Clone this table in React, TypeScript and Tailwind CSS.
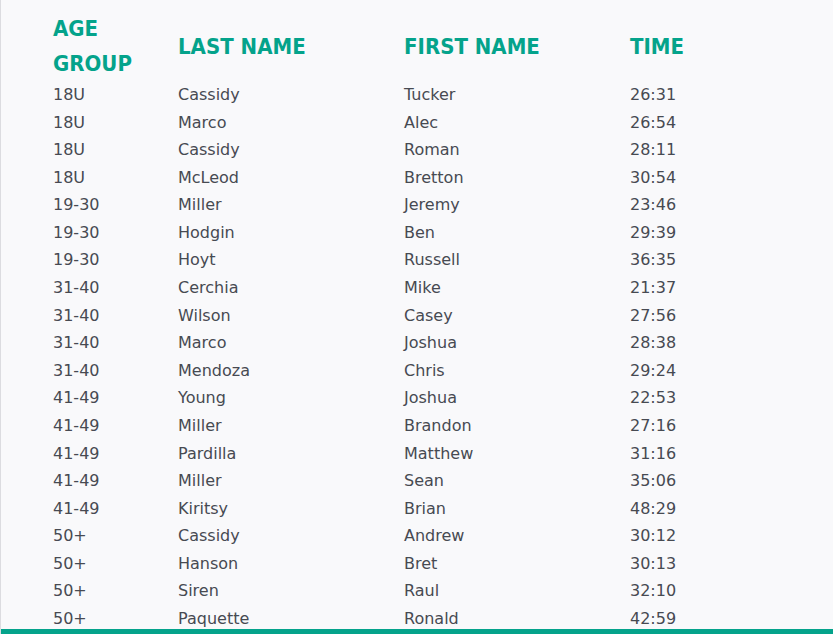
const rows: [string, string, string, string][] = [
  ["18U", "Cassidy", "Tucker", "26:31"],
  ["18U", "Marco", "Alec", "26:54"],
  ["18U", "Cassidy", "Roman", "28:11"],
  ["18U", "McLeod", "Bretton", "30:54"],
  ["19-30", "Miller", "Jeremy", "23:46"],
  ["19-30", "Hodgin", "Ben", "29:39"],
  ["19-30", "Hoyt", "Russell", "36:35"],
  ["31-40", "Cerchia", "Mike", "21:37"],
  ["31-40", "Wilson", "Casey", "27:56"],
  ["31-40", "Marco", "Joshua", "28:38"],
  ["31-40", "Mendoza", "Chris", "29:24"],
  ["41-49", "Young", "Joshua", "22:53"],
  ["41-49", "Miller", "Brandon", "27:16"],
  ["41-49", "Pardilla", "Matthew", "31:16"],
  ["41-49", "Miller", "Sean", "35:06"],
  ["41-49", "Kiritsy", "Brian", "48:29"],
  ["50+", "Cassidy", "Andrew", "30:12"],
  ["50+", "Hanson", "Bret", "30:13"],
  ["50+", "Siren", "Raul", "32:10"],
  ["50+", "Paquette", "Ronald", "42:59"],
];

export default function App() {
  return (
    <div className="relative h-[634px] w-[833px] overflow-hidden bg-[#f9f9fb] border-l border-[#dcdce0] font-['DejaVu_Sans',sans-serif]">
      <div className="pl-[52px] pt-[11px]">
        <table className="table-fixed border-collapse text-left">
          <colgroup>
            <col className="w-[125px]" />
            <col className="w-[226px]" />
            <col className="w-[226px]" />
            <col className="w-[150px]" />
          </colgroup>
          <thead>
            <tr className="text-[22px] font-bold leading-[35px] text-[#04a38b] align-middle font-['DejaVu_Sans_Condensed','DejaVu_Sans',sans-serif]">
              <th className="p-0 font-bold">AGE<br />GROUP</th>
              <th className="p-0 font-bold">LAST NAME</th>
              <th className="p-0 font-bold">FIRST NAME</th>
              <th className="p-0 font-bold">TIME</th>
            </tr>
          </thead>
          <tbody className="text-[16px] text-[#474a52]">
            {rows.map((r, i) => (
              <tr key={i} className="h-[27.58px]">
                {r.map((c, j) => (
                  <td key={j} className="p-0 leading-[27.58px]">{c}</td>
                ))}
              </tr>
            ))}
          </tbody>
        </table>
      </div>
      <div className="absolute bottom-0 left-0 right-0 h-[5px] bg-[#04a38b]" />
    </div>
  );
}
